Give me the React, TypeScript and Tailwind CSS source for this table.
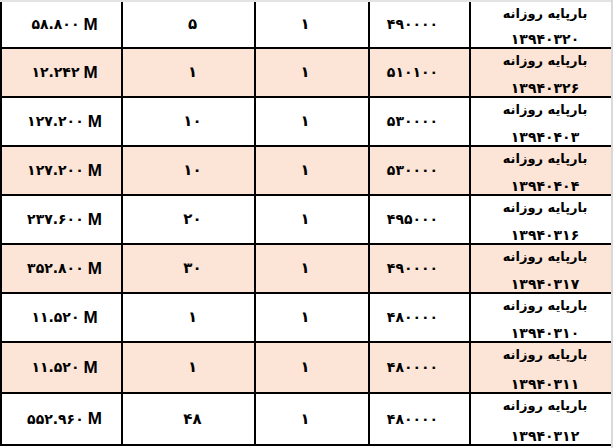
const rows = [
  { total: '۵۸.۸۰۰', qty: '۵', price: '۴۹۰۰۰۰', date: '۱۳۹۴۰۳۲۰' },
  { total: '۱۲.۲۴۲', qty: '۱', price: '۵۱۰۱۰۰', date: '۱۳۹۴۰۳۲۶' },
  { total: '۱۲۷.۲۰۰', qty: '۱۰', price: '۵۳۰۰۰۰', date: '۱۳۹۴۰۴۰۳' },
  { total: '۱۲۷.۲۰۰', qty: '۱۰', price: '۵۳۰۰۰۰', date: '۱۳۹۴۰۴۰۴' },
  { total: '۲۳۷.۶۰۰', qty: '۲۰', price: '۴۹۵۰۰۰', date: '۱۳۹۴۰۳۱۶' },
  { total: '۳۵۲.۸۰۰', qty: '۳۰', price: '۴۹۰۰۰۰', date: '۱۳۹۴۰۳۱۷' },
  { total: '۱۱.۵۲۰', qty: '۱', price: '۴۸۰۰۰۰', date: '۱۳۹۴۰۳۱۰' },
  { total: '۱۱.۵۲۰', qty: '۱', price: '۴۸۰۰۰۰', date: '۱۳۹۴۰۳۱۱' },
  { total: '۵۵۲.۹۶۰', qty: '۴۸', price: '۴۸۰۰۰۰', date: '۱۳۹۴۰۳۱۲' },
];

const fa = "font-['DejaVu_Sans',sans-serif] font-bold text-black";

export default function App() {
  return (
    <div className="w-[613px] h-[448px] bg-white overflow-hidden flex">
      <div className="flex-1 flex flex-col">
        {/* top gray strip */}
        <div className="h-[2px] bg-[#e3e3e3]" />
        {rows.map((r, i) => (
          <div
            key={i}
            className={`grid grid-cols-[121px_133px_114px_101px_142px] border-b-2 border-black ${
              i === 7 ? 'h-[51px]' : i === 8 ? 'h-[52px]' : i === 0 ? 'h-[47px]' : 'h-[49px]'
            } ${i % 2 === 1 ? 'bg-[#fce4d6]' : 'bg-white'}`}
          >
            <div className="border-l-2 border-black flex items-center justify-center pl-[6px]" dir="ltr">
              <span className={`${fa} text-[14px] tracking-[-1.5px]`}>{r.total}</span>
              <span className="ml-[4px] font-['Liberation_Sans',Arial,sans-serif] font-bold text-[17px] text-black">M</span>
            </div>
            <div className="border-l-2 border-black flex items-center justify-center pl-[8px]">
              <span className={`${fa} text-[15px]`}>{r.qty}</span>
            </div>
            <div className="border-l-2 border-black flex items-center justify-center pr-[14px]">
              <span className={`${fa} text-[15px]`}>۱</span>
            </div>
            <div className="border-l-2 border-black flex items-center justify-center pr-[14px]">
              <span className={`${fa} text-[14px] tracking-[-0.5px]`}>{r.price}</span>
            </div>
            <div className="border-l-2 border-black flex flex-col items-center justify-between pl-[8px] pt-[3px]" dir="rtl">
              <span className={`${fa} text-[13px] leading-[18px]`}>بارپایه روزانه</span>
              <span className={`${fa} text-[14px] leading-[14px] mb-[1px]`}>{r.date}</span>
            </div>
          </div>
        ))}
      </div>
      {/* right gray strip */}
      <div className="w-[2px] bg-[#d9d9d9]" />
    </div>
  );
}
